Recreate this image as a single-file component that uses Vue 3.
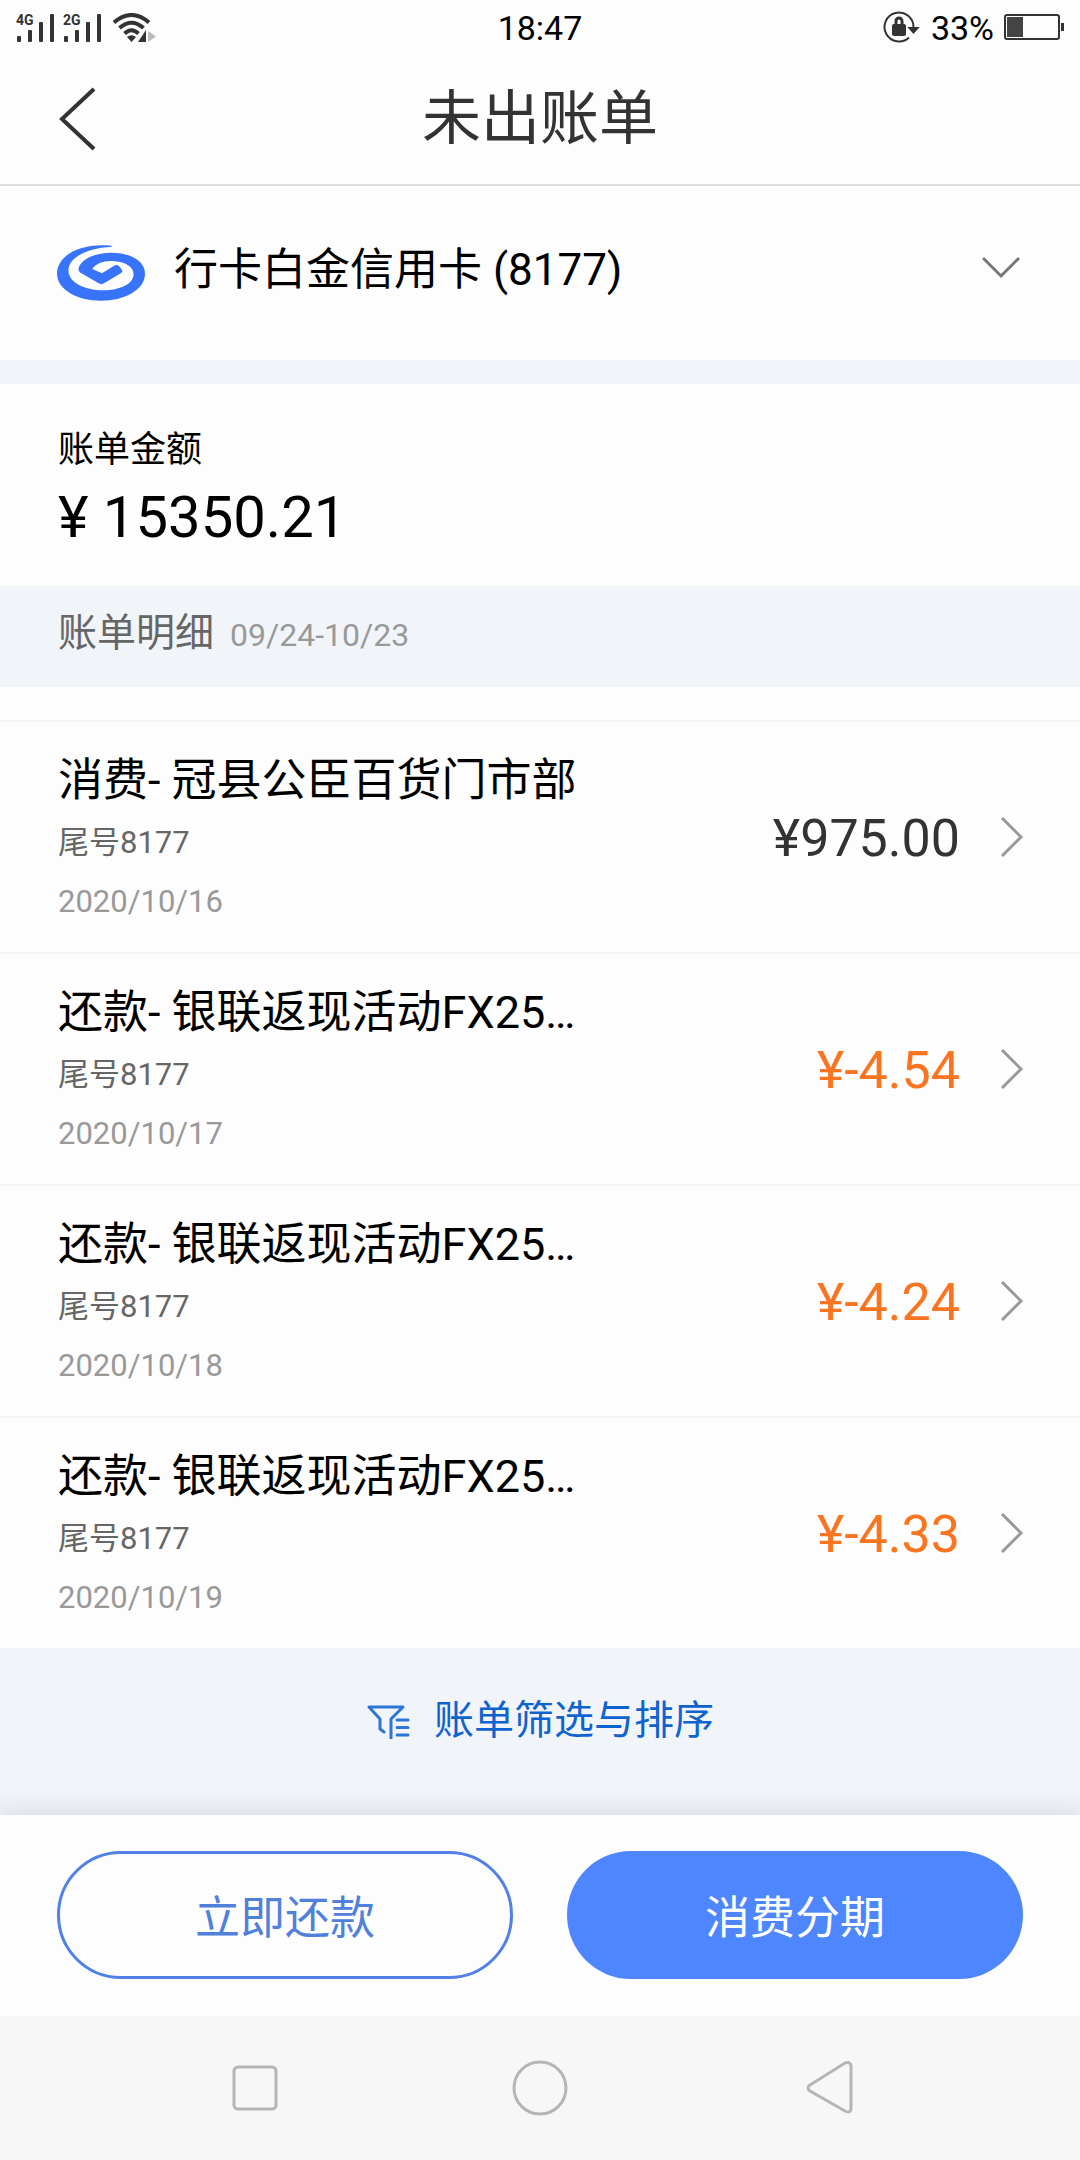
<script setup>
const transactions = [
  { id: 1, title: '消费- 冠县公臣百货门市部', tail: '尾号8177', date: '2020/10/16', amount: '¥975.00', credit: false },
  { id: 2, title: '还款- 银联返现活动FX25…', tail: '尾号8177', date: '2020/10/17', amount: '¥-4.54', credit: true },
  { id: 3, title: '还款- 银联返现活动FX25…', tail: '尾号8177', date: '2020/10/18', amount: '¥-4.24', credit: true },
  { id: 4, title: '还款- 银联返现活动FX25…', tail: '尾号8177', date: '2020/10/19', amount: '¥-4.33', credit: true },
]
const networks = ['4G', '2G']
</script>

<template>
  <div class="page">
    <div class="status">
      <div class="status-left">
        <svg v-for="net in networks" :key="net" width="39" height="30" viewBox="0 0 39 30" fill="#333">
          <text x="0" y="12" font-size="14" font-weight="700">{{ net }}</text>
          <rect x="1" y="23" width="4" height="6" rx="1" />
          <rect x="12" y="17" width="4" height="12" rx="1" />
          <rect x="23" y="9" width="4" height="20" rx="1" />
          <rect x="34" y="1" width="4" height="28" rx="1" />
        </svg>
        <svg width="46" height="30" viewBox="0 0 46 30" fill="none" stroke="#333" stroke-width="4">
          <path d="M4 9.500Q21.500-5.500 39 9.500" />
          <path d="M9.500 15Q21.500 4.500 33.500 15" />
          <path d="M14.500 20.500Q21.500 14 28.500 20.500" />
          <path d="M17 24Q21.500 20.500 26 24L21.500 29Z" fill="#333" stroke="none" />
          <path d="M36 17V29H28Z" fill="#333" stroke="none" />
          <path d="M38 18L46 23.500L38 29Z" fill="#bbb" stroke="none" />
        </svg>
      </div>
      <span>18:47</span>
      <div class="status-right">
        <svg width="38" height="34" viewBox="0 0 38 34" fill="none" stroke="#333" stroke-width="2">
          <path d="M26 26.500A14.500 14.500 0 1 1 30.500 16" />
          <path d="M26.500 17H34.500L30.500 21.500Z" fill="#333" />
          <rect x="10" y="14" width="12" height="10" rx="1" fill="#333" />
          <path d="M13 14V10A3 3 0 0 1 19 10V14" stroke-width="3" />
        </svg>
        <span>33%</span>
        <svg width="60" height="28" viewBox="0 0 60 28">
          <rect x="1" y="1" width="54" height="24" rx="2" fill="none" stroke="#333" stroke-width="2" />
          <rect x="3" y="3" width="16" height="20" fill="#444" />
          <rect x="57" y="9" width="3" height="8" fill="#333" />
        </svg>
      </div>
    </div>

    <header class="header">
      <button class="back" type="button" aria-label="返回">
        <svg width="38" height="64" viewBox="0 0 38 64" fill="none" stroke="#333" stroke-width="4">
          <path d="M36 2L4 32L36 62" />
        </svg>
      </button>
      <h1>未出账单</h1>
    </header>

    <button class="card" type="button">
      <svg class="logo" width="88" height="56" viewBox="0 0 262 168" fill="#3874fb" preserveAspectRatio="none">
        <path d="M162 2C65 -8 0 34 0 86C0 132 58 167 130 167C205 167 262 132 262 86C262 48 220 23 160 23C105 23 64 50 64 74Q64 79 70 83L124 115Q132 120 140 115L190 85Q197 80 193 74L185 64Q178 57 170 62L134 85L105 72C116 55 138 47 165 48C205 50 228 66 228 88C228 118 185 136 138 136C80 136 34 112 34 76C34 38 90 8 162 6Z" />
      </svg>
      <span class="card-name">行卡白金信用卡 (8177)</span>
      <svg width="40" height="24" viewBox="0 0 40 24" fill="none" stroke="#777" stroke-width="3">
        <path d="M1 3L19 21L37 3" />
      </svg>
    </button>

    <section class="summary">
      <p class="summary-label">账单金额</p>
      <p class="summary-amount">¥ 15350.21</p>
    </section>

    <div class="detail-head">
      <h2>账单明细</h2>
      <span class="range">09/24-10/23</span>
    </div>

    <ul class="list">
      <li v-for="item in transactions" :key="item.id">
        <a class="row" href="#">
          <span class="info">
            <span class="title">{{ item.title }}</span>
            <span class="tail">{{ item.tail }}</span>
            <span class="date">{{ item.date }}</span>
          </span>
          <span class="amount" :class="{ credit: item.credit }">{{ item.amount }}</span>
          <svg width="24" height="40" viewBox="0 0 24 40" fill="none" stroke="#999" stroke-width="3">
            <path d="M2 1L21 20L2 39" />
          </svg>
        </a>
      </li>
    </ul>

    <div class="filter-area">
      <button class="filter" type="button">
        <svg width="44" height="36" viewBox="0 0 44 36" fill="none" stroke="#2e75d9" stroke-width="3" stroke-linecap="round" stroke-linejoin="round">
          <path d="M18 29L14 26V16L3 4H37L25 16V35" />
          <path d="M31 17H42M31 24.500H42M31 32H42" />
        </svg>
        <span>账单筛选与排序</span>
      </button>
    </div>

    <footer class="actions">
      <button class="action outline" type="button">立即还款</button>
      <button class="action solid" type="button">消费分期</button>
    </footer>

    <nav class="system-nav">
      <button type="button" aria-label="最近任务">
        <svg width="56" height="56" viewBox="0 0 56 56"><rect x="7" y="7" width="42" height="42" rx="4" /></svg>
      </button>
      <button type="button" aria-label="主屏幕">
        <svg width="56" height="56" viewBox="0 0 56 56"><circle cx="28" cy="28" r="26" /></svg>
      </button>
      <button type="button" aria-label="返回上一级">
        <svg width="56" height="56" viewBox="0 0 56 56"><path d="M48 3Q54 1 54 7V48Q54 54 48 51L13 31Q9 28 13 25Z" /></svg>
      </button>
    </nav>
  </div>
</template>

<style>
body {
  margin: 0;
  background: #fdfdfd;
}
</style>

<style scoped>
.page {
  display: flex;
  flex-direction: column;
  min-height: 100vh;
  font-family: Roboto, "Noto Sans CJK SC", sans-serif;
  color: #000;
  background: #fdfdfd;
}
button {
  margin: 0;
  padding: 0;
  border: 0;
  background: none;
  font-family: inherit;
  color: inherit;
}
svg {
  display: block;
  flex: none;
}
h1, h2, p, ul {
  margin: 0;
  padding: 0;
  font-weight: 400;
}
.status {
  display: grid;
  grid-template-columns: 1fr auto 1fr;
  align-items: center;
  height: 54px;
  padding: 0 16px;
  font-size: 34px;
  line-height: 56px;
}
.status-left, .status-right {
  display: flex;
  align-items: center;
  gap: 8px;
}
.status-right {
  justify-content: flex-end;
  gap: 10px;
}
.header {
  display: grid;
  grid-template-columns: 1fr auto 1fr;
  align-items: center;
  height: 130px;
  padding: 0 58px;
  border-bottom: 2px solid #dfdfdf;
}
.back {
  justify-self: start;
}
h1 {
  font-size: 59px;
  line-height: 80px;
  color: #333;
}
.card {
  display: flex;
  align-items: center;
  height: 174px;
  padding: 0 58px 12px 57px;
  box-sizing: border-box;
  gap: 29px;
  text-align: left;
}
.logo {
  margin-top: 12px;
}
.card-name {
  flex: 1;
  margin-top: 6px;
  font-size: 44px;
  line-height: 64px;
}
.summary {
  padding: 40px 58px 28px;
  border-top: 24px solid #f1f4f8;
}
.summary-label {
  font-size: 36px;
  line-height: 52px;
}
.summary-amount {
  font-size: 58px;
  line-height: 82px;
}
.detail-head {
  display: flex;
  align-items: baseline;
  gap: 16px;
  height: 101px;
  padding: 0 58px;
  background: #f1f4f8;
  line-height: 94px;
  box-sizing: border-box;
}
h2 {
  font-size: 39px;
  color: #666;
}
.range {
  font-size: 32px;
  color: #999;
}
.list {
  padding-top: 33px;
  list-style: none;
}
.row {
  display: flex;
  align-items: center;
  height: 230px;
  padding: 0 56px 0 58px;
  border-top: 2px solid #f4f4f4;
  color: inherit;
  text-decoration: none;
}
.info {
  display: flex;
  flex: 1;
  flex-direction: column;
  padding-top: 6px;
}
.title {
  font-size: 45px;
  line-height: 64px;
}
.tail, .date {
  font-size: 31px;
  line-height: 59px;
  color: #666;
}
.date {
  color: #999;
}
.amount {
  margin-right: 40px;
  padding-top: 4px;
  font-size: 52px;
  line-height: 64px;
  color: #333;
}
.credit {
  color: #fb7420;
}
.filter-area {
  flex: 1;
  background: #f1f4f8;
}
.filter {
  display: flex;
  align-items: center;
  gap: 24px;
  margin: 45px auto 0;
  font-size: 40px;
  line-height: 56px;
  color: #0f63d0;
}
.actions {
  display: grid;
  grid-template-columns: 1fr 1fr;
  gap: 54px;
  padding: 36px 57px 37px;
  background: #fdfdfd;
  box-shadow: 0 0 24px 2px #d6d6e2;
  clip-path: inset(-30px 0 0 0);
}
.action {
  height: 128px;
  padding-bottom: 2px;
  border-radius: 64px;
  font-size: 45px;
}
.outline {
  border: 3px solid #5080e8;
  color: #5080dc;
}
.solid {
  background: #4e86ff;
  color: #fff;
}
.system-nav {
  display: flex;
  justify-content: center;
  gap: 229px;
  padding: 44px 0;
  background: #f7f7f7;
}
.system-nav svg {
  fill: none;
  stroke: #b5b5b5;
  stroke-width: 3px;
}
</style>
